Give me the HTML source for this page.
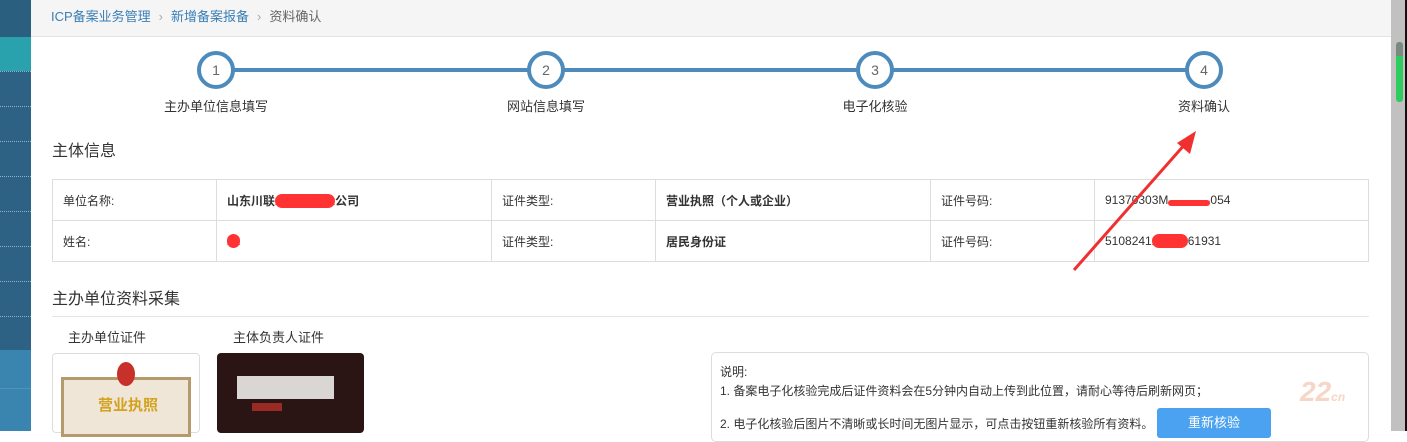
<!DOCTYPE html>
<html><head><meta charset="utf-8"><style>
*{margin:0;padding:0;box-sizing:border-box}
body{width:1407px;height:431px;overflow:hidden;background:#fff;font-family:"Liberation Sans","Noto Sans CJK SC",sans-serif;color:#333;position:relative;font-size:12px}
.abs{position:absolute}
.sb{left:0;top:0;width:31px;height:431px;background:#2e6284}
.dl{position:absolute;left:0;width:31px;border-top:1px dotted #8fb3c9}
.hdr{left:31px;top:0;width:1360px;height:37px;background:#f5f5f5;border-bottom:1px solid #e3e3e3;font-size:13px;line-height:34px;padding-left:20px;color:#777}
.hdr a{color:#3a7fb5}
.hdr i{font-style:normal;color:#aaa;margin:0 8px}
.circ{width:38px;height:38px;border:4px solid #4d8bbd;border-radius:50%;background:#fff;text-align:center;line-height:30px;font-size:14px;color:#666}
.lbl{font-size:13px;color:#333;width:200px;text-align:center}
table{border-collapse:collapse;position:absolute;left:52px;top:179px;width:1317px}
td{border:1px solid #ddd;height:41px;padding-left:10px;font-size:12px}
td.v{font-weight:bold;color:#333}
.sec{font-size:16px;color:#333}
</style></head><body>
<div class="abs sb">
<div class="abs" style="top:0;height:37px;width:31px;background:#2b5f80"></div>
<div class="abs" style="top:37px;height:34px;width:31px;background:#29a2ae"></div>
<div class="dl" style="top:71px"></div><div class="dl" style="top:106px"></div><div class="dl" style="top:141px"></div><div class="dl" style="top:176px"></div><div class="dl" style="top:211px"></div><div class="dl" style="top:246px"></div><div class="dl" style="top:281px"></div><div class="dl" style="top:316px"></div>
<div class="abs" style="top:350px;height:81px;width:31px;background:#3a84b0"></div>
<div class="abs" style="top:388px;width:31px;border-top:1px solid #4d93bd"></div>
</div>
<div class="abs hdr"><a>ICP备案业务管理</a><i>›</i><a>新增备案报备</a><i>›</i><span style="color:#666">资料确认</span></div>
<div class="abs" style="left:1391px;top:0;width:16px;height:431px;background:#c1c1c1;border-right:2px solid #111"></div>
<div class="abs" style="left:1396px;top:42px;width:7px;height:60px;border-radius:3px;background:#2ecc5f;border-top:14px solid #7a8a80"></div>
<div class="abs" style="left:216px;top:68px;width:988px;height:4px;background:#4d8bbd"></div>
<div class="abs circ" style="left:197px;top:51px">1</div>
<div class="abs circ" style="left:527px;top:51px">2</div>
<div class="abs circ" style="left:856px;top:51px">3</div>
<div class="abs circ" style="left:1185px;top:51px">4</div>
<div class="abs lbl" style="left:116px;top:96px">主办单位信息填写</div>
<div class="abs lbl" style="left:446px;top:96px">网站信息填写</div>
<div class="abs lbl" style="left:775px;top:96px">电子化核验</div>
<div class="abs lbl" style="left:1104px;top:96px">资料确认</div>
<div class="abs sec" style="left:52px;top:137px">主体信息</div>
<table>
<tr><td style="width:164px">单位名称:</td><td class="v" style="width:275px">山东川联<span style="color:#f33;background:#f33;border-radius:8px">xxxxxxxxx</span>公司</td><td style="width:164px">证件类型:</td><td class="v" style="width:275px">营业执照（个人或企业）</td><td style="width:164px">证件号码:</td><td>91370303M<span style="background:#f33;color:#f33;border-radius:4px;font-size:6px">xxxxxxxxxxxxxx</span>054</td></tr>
<tr><td>姓名:</td><td class="v"><span style="background:#f33;color:#f33;border-radius:8px">xx</span></td><td>证件类型:</td><td class="v">居民身份证</td><td>证件号码:</td><td>5108241<span style="background:#f33;color:#f33;border-radius:8px">xxxxxx</span>61931</td></tr>
</table>
<div class="abs sec" style="left:52px;top:285px">主办单位资料采集</div>
<div class="abs" style="left:52px;top:316px;width:1317px;border-top:1px solid #e5e5e5"></div>
<div class="abs" style="left:68px;top:327px;font-size:13px">主办单位证件</div>
<div class="abs" style="left:233px;top:327px;font-size:13px">主体负责人证件</div>
<div class="abs" style="left:52px;top:353px;width:148px;height:80px;border:1px solid #ddd;border-radius:4px;background:#fff">
<div class="abs" style="left:8px;top:23px;width:130px;height:60px;background:#efe6d8;border:3px solid #b59a6e"></div>
<div class="abs" style="left:64px;top:8px;width:18px;height:24px;border-radius:50%;background:#c8302a"></div>
<div class="abs" style="left:45px;top:40px;color:#d3a21e;font-weight:bold;font-size:15px">营业执照</div>
</div>
<div class="abs" style="left:217px;top:353px;width:147px;height:80px;background:#2a1414;border-radius:4px">
<div class="abs" style="left:20px;top:23px;width:97px;height:23px;background:#d9d6d4"></div>
<div class="abs" style="left:35px;top:50px;width:30px;height:8px;background:#9a2a24"></div>
</div>
<div class="abs" style="left:711px;top:352px;width:658px;height:90px;border:1px solid #ddd;border-radius:5px;background:#fff"></div>
<div class="abs" style="left:720px;top:363px;font-size:12px;line-height:19px;color:#333">说明:<br>1. 备案电子化核验完成后证件资料会在5分钟内自动上传到此位置，请耐心等待后刷新网页；</div>
<div class="abs" style="left:720px;top:415px;font-size:12px;color:#333">2. 电子化核验后图片不清晰或长时间无图片显示，可点击按钮重新核验所有资料。</div>
<div class="abs" style="left:1157px;top:408px;width:114px;height:30px;background:#4aa2f0;border-radius:3px;color:#fff;text-align:center;line-height:30px;font-size:13px">重新核验</div>
<div class="abs" style="left:1300px;top:376px;font-size:28px;font-weight:bold;font-style:italic;color:#f6d6c6">22<span style="font-size:12px">cn</span></div>
<svg class="abs" style="left:0;top:0" width="1407" height="431"><line x1="1074" y1="270" x2="1186" y2="143" stroke="#f03030" stroke-width="3"/><polygon points="1196,131 1177,143 1190,154" fill="#f03030"/></svg>
</body></html>
